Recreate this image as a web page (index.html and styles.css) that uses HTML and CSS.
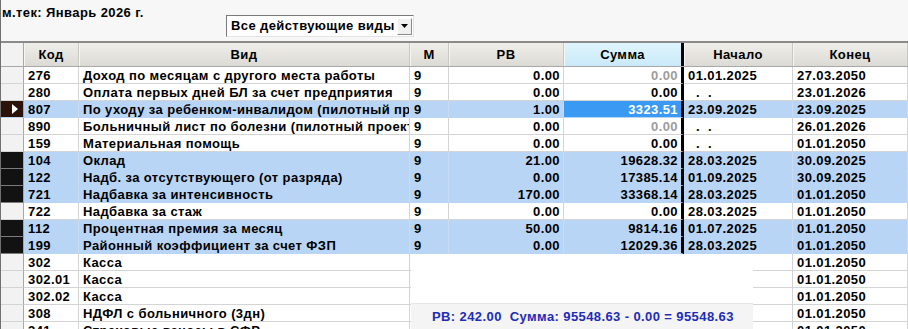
FILE: index.html
```html
<!DOCTYPE html>
<html lang="ru">
<head>
<meta charset="utf-8">
<link rel="stylesheet" href="styles.css">
</head>
<body>
<div class="app">
  <div class="top">
    <div class="title">м.тек: Январь 2026 г.</div>
    <div class="combo">
      <span class="combo-text">Все действующие виды</span>
      <span class="combo-btn"><svg width="7" height="4" viewBox="0 0 7 4"><path d="M0 0h7L3.5 4z" fill="#000"/></svg></span>
    </div>
  </div>
  <div class="grid">
    <div class="hdr">
      <div class="h ind"></div>
      <div class="h">Код</div>
      <div class="h">Вид</div>
      <div class="h">М</div>
      <div class="h">РВ</div>
      <div class="h sorted">Сумма</div>
      <div class="h">Начало</div>
      <div class="h">Конец</div>
    </div>

    <div class="row">
      <div class="c ind"></div><div class="c">276</div><div class="c">Доход по месяцам с другого места работы</div><div class="c">9</div><div class="c num">0.00</div><div class="c num sum gray">0.00</div><div class="c">01.01.2025</div><div class="c">27.03.2050</div>
    </div>
    <div class="row">
      <div class="c ind"></div><div class="c">280</div><div class="c">Оплата первых дней БЛ за счет предприятия</div><div class="c">9</div><div class="c num">0.00</div><div class="c num sum">0.00</div><div class="c">  .  .</div><div class="c">23.01.2026</div>
    </div>
    <div class="row hl">
      <div class="c ind cur"><svg width="6" height="10" viewBox="0 0 6 10"><path d="M0 0L6 5L0 10z" fill="#fff"/></svg></div><div class="c">807</div><div class="c">По уходу за ребенком-инвалидом (пилотный проект ФСС)</div><div class="c">9</div><div class="c num">1.00</div><div class="c num sum sel">3323.51</div><div class="c">23.09.2025</div><div class="c">23.09.2025</div>
    </div>
    <div class="row">
      <div class="c ind"></div><div class="c">890</div><div class="c">Больничный лист по болезни (пилотный проект ФСС)</div><div class="c">9</div><div class="c num">0.00</div><div class="c num sum gray">0.00</div><div class="c">  .  .</div><div class="c">26.01.2026</div>
    </div>
    <div class="row">
      <div class="c ind"></div><div class="c">159</div><div class="c">Материальная помощь</div><div class="c">9</div><div class="c num">0.00</div><div class="c num sum">0.00</div><div class="c">  .  .</div><div class="c">01.01.2050</div>
    </div>
    <div class="row hl">
      <div class="c ind mark"></div><div class="c">104</div><div class="c">Оклад</div><div class="c">9</div><div class="c num">21.00</div><div class="c num sum">19628.32</div><div class="c">28.03.2025</div><div class="c">30.09.2025</div>
    </div>
    <div class="row hl">
      <div class="c ind mark"></div><div class="c">122</div><div class="c">Надб. за отсутствующего (от разряда)</div><div class="c">9</div><div class="c num">0.00</div><div class="c num sum">17385.14</div><div class="c">01.09.2025</div><div class="c">30.09.2025</div>
    </div>
    <div class="row hl">
      <div class="c ind mark"></div><div class="c">721</div><div class="c">Надбавка за интенсивность</div><div class="c">9</div><div class="c num">170.00</div><div class="c num sum">33368.14</div><div class="c">28.03.2025</div><div class="c">01.01.2050</div>
    </div>
    <div class="row">
      <div class="c ind"></div><div class="c">722</div><div class="c">Надбавка за стаж</div><div class="c">9</div><div class="c num">0.00</div><div class="c num sum">0.00</div><div class="c">28.03.2025</div><div class="c">01.01.2050</div>
    </div>
    <div class="row hl">
      <div class="c ind mark"></div><div class="c">112</div><div class="c">Процентная премия за месяц</div><div class="c">9</div><div class="c num">50.00</div><div class="c num sum">9814.16</div><div class="c">01.07.2025</div><div class="c">01.01.2050</div>
    </div>
    <div class="row hl">
      <div class="c ind mark"></div><div class="c">199</div><div class="c">Районный коэффициент за счет ФЗП</div><div class="c">9</div><div class="c num">0.00</div><div class="c num sum">12029.36</div><div class="c">28.03.2025</div><div class="c">01.01.2050</div>
    </div>
    <div class="row">
      <div class="c ind"></div><div class="c">302</div><div class="c">Касса</div><div class="c"></div><div class="c num"></div><div class="c num sum"></div><div class="c"></div><div class="c">01.01.2050</div>
    </div>
    <div class="row">
      <div class="c ind"></div><div class="c">302.01</div><div class="c">Касса</div><div class="c"></div><div class="c num"></div><div class="c num sum"></div><div class="c"></div><div class="c">01.01.2050</div>
    </div>
    <div class="row">
      <div class="c ind"></div><div class="c">302.02</div><div class="c">Касса</div><div class="c"></div><div class="c num"></div><div class="c num sum"></div><div class="c"></div><div class="c">01.01.2050</div>
    </div>
    <div class="row">
      <div class="c ind"></div><div class="c">308</div><div class="c">НДФЛ с больничного (3дн)</div><div class="c"></div><div class="c num"></div><div class="c num sum"></div><div class="c"></div><div class="c">01.01.2050</div>
    </div>
    <div class="row">
      <div class="c ind"></div><div class="c">341</div><div class="c">Страховые взносы в СФР</div><div class="c"></div><div class="c num"></div><div class="c num sum"></div><div class="c"></div><div class="c">01.01.2050</div>
    </div>
  </div>

  <div class="panel">
    <div class="foot">РВ: 242.00  Сумма: 95548.63 - 0.00 = 95548.63</div>
  </div>
</div>
</body>
</html>
```
FILE: styles.css
```css
html, body {
  margin: 0;
  padding: 0;
}
body {
  width: 908px;
  height: 329px;
  overflow: hidden;
  background: #f7f7f7;
  font-family: "Liberation Sans", Arial, sans-serif;
  font-weight: bold;
  font-size: 13px;
  letter-spacing: 0.4px;
  color: #000;
}
.app {
  position: relative;
  width: 908px;
  height: 329px;
  box-sizing: border-box;
  border-left: 1px solid #707070;
}
.top {
  height: 41px;
  display: grid;
  grid-template-columns: 225px auto;
  align-items: start;
}
.title {
  padding: 5px 0 0 1px;
  line-height: 15px;
}
.combo {
  margin-top: 15px;
  width: 188px;
  height: 22px;
  box-sizing: border-box;
  border: 1px solid;
  border-color: #7a7a7a #e4e4e4 #e4e4e4 #7a7a7a;
  background: #fff;
  display: flex;
  align-items: center;
  padding-left: 4px;
  padding-right: 1px;
}
.combo-text {
  line-height: 18px;
}
.combo-btn {
  margin-left: auto;
  width: 15px;
  height: 17px;
  box-sizing: border-box;
  background: #f0f0f0;
  border: 1px solid;
  border-color: #fff #8a8a8a #8a8a8a #fff;
  display: flex;
  align-items: center;
  justify-content: center;
}
.grid {
  background: #fff;
}
.hdr, .row {
  display: grid;
  grid-template-columns: 23px 55px 331px 39px 115px 120px 109px 115px;
}
.hdr {
  height: 26px;
  box-sizing: border-box;
  border-top: 2px solid #8a8a8a;
  border-bottom: 1px solid #a8a8a8;
  background: linear-gradient(#efeee9, #dcdad4);
}
.h {
  text-align: center;
  line-height: 23px;
  border-right: 1px solid #c9c7c1;
  box-shadow: inset 1px 0 0 #f6f6f4;
}
.h.sorted {
  background: linear-gradient(#e0f5fd, #c9e9f9);
  border-right: 3px solid #000;
}
.row {
  height: 17px;
}
.c {
  box-sizing: border-box;
  height: 17px;
  border-right: 1px solid #d4d4d4;
  border-bottom: 1px solid #d4d4d4;
  padding: 1px 3px 0 4px;
  line-height: 15px;
  white-space: pre;
  overflow: hidden;
}
.num {
  text-align: right;
  padding-right: 3px;
}
.sum {
  border-right: 3px solid #000;
}
.gray {
  color: #9c9c9c;
}
.ind {
  background: #f2f2f2;
  border-right-color: #a8a8a8;
  padding: 0;
}
.hl .c {
  background: #b9d5f5;
  border-bottom-color: #b9d5f5;
  border-right-color: #cbdcf2;
}
.hl .c.sum {
  border-right-color: #000;
}
.hl .ind.mark {
  background: #121212;
  border-bottom-color: #7c7c7c;
  border-right-color: #a8a8a8;
}
.hl .ind.cur {
  background: #2c130a;
  border-right-color: #a8a8a8;
  display: flex;
  align-items: center;
  padding-left: 11px;
}
.hl .c.sel {
  background: #3a99f3;
  color: #fff;
  border-right-color: #000;
}
.panel {
  position: absolute;
  left: 410px;
  top: 254px;
  width: 342px;
  height: 75px;
  background: #fff;
  display: flex;
  flex-direction: column;
  justify-content: flex-end;
}
.foot {
  height: 26px;
  box-sizing: border-box;
  background: #f4f4f4;
  border-top: 1px solid #e6e6e6;
  color: #1e2cb8;
  padding-left: 21px;
  line-height: 25px;
  white-space: pre;
}
```
